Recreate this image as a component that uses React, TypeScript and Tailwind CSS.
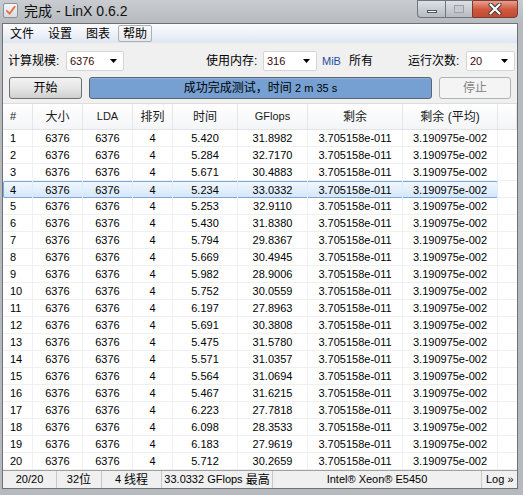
import React from "react";

const times = ["5.420","5.284","5.671","5.234","5.253","5.430","5.794","5.669","5.982","5.752","6.197","5.691","5.475","5.571","5.564","5.467","6.223","6.098","6.183","5.712"];
const gflops = ["31.8982","32.7170","30.4883","33.0332","32.9110","31.8380","29.8367","30.4945","28.9006","30.0559","27.8963","30.3808","31.5780","31.0357","31.0694","31.6215","27.7818","28.3533","27.9619","30.2659"];

function Combo({ value, w }: { value: string; w: string }) {
  return (
    <div className={`${w} h-[20px] bg-white border border-[#d5d5d5] rounded-[2px] flex items-center pl-[3px] pr-[5px]`}>
      <span className="text-[#3a0a0a] text-[11px]">{value}</span>
      <svg className="ml-auto" width="8" height="5" viewBox="0 0 8 5"><path d="M0 0H7L3.5 4Z" fill="#000" /></svg>
    </div>
  );
}

const cols = [
  { w: "w-[30px]", al: "justify-start pl-[7px]" },
  { w: "w-[50px]", al: "justify-center" },
  { w: "w-[50px]", al: "justify-center" },
  { w: "w-[40px]", al: "justify-center" },
  { w: "w-[65px]", al: "justify-center" },
  { w: "w-[70px]", al: "justify-center" },
  { w: "w-[95px]", al: "justify-center" },
  { w: "w-[95px]", al: "justify-center" },
];

export default function App() {
  const headers = ["#", "大小", "LDA", "排列", "时间", "GFlops", "剩余", "剩余 (平均)"];
  const hsize = ["text-[11px]", "text-[12px]", "text-[11px]", "text-[12px]", "text-[12px]", "text-[11px]", "text-[12px]", "text-[12px]"];
  const rows = times.map((t, i) => [String(i + 1), "6376", "6376", "4", t, gflops[i], "3.705158e-011", "3.190975e-002"]);
  return (
    <div className="w-[523px] h-[495px] bg-[#b6babe] flex flex-col overflow-hidden font-['Liberation_Sans','Noto_Sans_CJK_SC',sans-serif] text-[11px] text-black">
      {/* title bar */}
      <div className="h-[23px] flex items-start bg-gradient-to-b from-[#c9ccd0] to-[#b7bbbf]">
        <div className="mt-[3px] ml-[3px] w-[15px] h-[15px] rounded-[2px] border border-[#8a9199] bg-gradient-to-b from-[#f4f6f8] to-[#d8dde2] flex items-center justify-center">
          <svg width="11" height="11" viewBox="0 0 12 12"><path d="M2 6.5 L5 9.5 L10.5 2" stroke="#e8703a" strokeWidth="2" fill="none" strokeLinecap="round" /></svg>
        </div>
        <div className="ml-[6px] mt-[3px] text-[14px] leading-[17px] text-[#111] whitespace-nowrap">完成 - LinX 0.6.2</div>
        <div className="ml-auto mr-[5px] flex h-[18px]">
          <div className="w-[28px] h-full border border-[#6f757c] border-r-0 rounded-bl-[4px] bg-gradient-to-b from-[#dde1e5] to-[#b6bbc1] flex items-center justify-center">
            <div className="w-[10px] h-[3px] mt-[5px] bg-white border border-[#50565c]" />
          </div>
          <div className="w-[27px] h-full border border-[#6f757c] border-r-0 bg-gradient-to-b from-[#dde1e5] to-[#b6bbc1] flex items-center justify-center">
            <div className="w-[10px] h-[8px] border border-[#9ca1a6] bg-[#c8ccd0]" />
          </div>
          <div className="w-[46px] h-full border border-[#7a3a30] rounded-br-[4px] bg-gradient-to-b from-[#e8a090] via-[#d05a40] to-[#c24a30] flex items-center justify-center">
            <svg width="14" height="12" viewBox="0 0 14 12"><path d="M2.5 1.5 L11.5 10.5 M11.5 1.5 L2.5 10.5" stroke="#3a3a3a" strokeWidth="4" strokeLinecap="round" /><path d="M2.5 1.5 L11.5 10.5 M11.5 1.5 L2.5 10.5" stroke="#fff" strokeWidth="2.2" strokeLinecap="round" /></svg>
          </div>
        </div>
      </div>
      {/* client */}
      <div className="flex-1 ml-[2px] mr-[5px] mb-[6px] border border-[#6d7278] bg-[#f0f0f0] flex flex-col min-h-0">
        {/* menu */}
        <div className="h-[19px] flex items-center bg-gradient-to-b from-[#fdfdfe] to-[#dfe6f2] text-[12px] shrink-0">
          <span className="ml-[7px]">文件</span>
          <span className="ml-[14px]">设置</span>
          <span className="ml-[14px]">图表</span>
          <span className="ml-[8px] h-[17px] px-[4px] flex items-center border border-[#a9b0b8] rounded-[2px] bg-gradient-to-b from-[#fafafa] to-[#e6e8eb]">帮助</span>
        </div>
        {/* row 1 */}
        <div className="mt-[8px] h-[20px] flex items-center shrink-0 text-[12px]">
          <span className="ml-[5px] w-[58px]">计算规模:</span>
          <Combo value="6376" w="w-[58px]" />
          <span className="ml-[82px] w-[57px]">使用内存:</span>
          <Combo value="316" w="w-[54px]" />
          <span className="ml-[5px] text-[11px] text-[#1f4f9e]">MiB</span>
          <span className="ml-[8px]">所有</span>
          <span className="ml-[35px] w-[58px]">运行次数:</span>
          <Combo value="20" w="w-[49px]" />
        </div>
        {/* row 2 */}
        <div className="mt-[6px] h-[22px] flex shrink-0 text-[12px]">
          <div className="ml-[6px] w-[73px] h-full border border-[#707070] rounded-[3px] bg-gradient-to-b from-[#f2f2f2] via-[#e6e6e6] to-[#cfcfcf] flex items-center justify-center">开始</div>
          <div className="ml-[7px] w-[343px] h-full border border-[#5a6470] rounded-[3px] bg-[#76a0d2] shadow-[inset_0_1px_0_#8fb2dc] flex items-center justify-center">
            <span>成功完成测试，时间 <span className="text-[11px]">2 m 35 s</span></span>
          </div>
          <div className="ml-[7px] w-[72px] h-full border border-[#adb2b5] rounded-[3px] bg-[#f4f4f4] text-[#838383] flex items-center justify-center">停止</div>
        </div>
        {/* table */}
        <div className="mt-[4px] flex-1 flex flex-col bg-white border-t border-[#dcdcdc] min-h-0">
          <div className="h-[26px] flex shrink-0 bg-gradient-to-b from-[#ffffff] to-[#f4f5f7] border-b border-[#e2e4e8]">
            {headers.map((h, i) => (
              <div key={i} className={`${cols[i].w} ${cols[i].al} flex items-center border-r border-[#e4e6ea] ${hsize[i]} text-[#1a1a1a] whitespace-nowrap`}>{h}</div>
            ))}
            <div className="flex-1 border-r border-[#e4e6ea]" />
          </div>
          {rows.map((r, ri) => (
            <div key={ri} className="h-[17px] flex shrink-0">
              <div className={`flex ${ri === 3 ? "bg-gradient-to-b from-[#f2f8fe] to-[#d3e6fb] shadow-[inset_0_0_0_1px_#7fa6d8] rounded-[2px]" : "border-b border-[#f0f0f0]"}`}>
                {r.map((c, ci) => (
                  <div key={ci} className={`${cols[ci].w} ${cols[ci].al} flex items-center border-r ${ri === 3 ? "border-[#e0ebf9]" : "border-[#f0f0f0]"} leading-[16px] text-[11px]`}>{c}</div>
                ))}
              </div>
              <div className="flex-1 border-b border-[#f0f0f0]" />
            </div>
          ))}
          <div className="flex-1" />
        </div>
        {/* status bar */}
        <div className="h-[18px] flex shrink-0 border-t border-[#a0a0a0] bg-[#f0f0f0] text-[11px] whitespace-nowrap">
          <div className="w-[54px] flex items-center justify-center border-r border-[#c8c8c8]">20/20</div>
          <div className="w-[45px] flex items-center justify-center border-r border-[#c8c8c8]">32<span className="text-[12px]">位</span></div>
          <div className="w-[60px] flex items-center justify-center border-r border-[#c8c8c8]">4 <span className="text-[12px] ml-[3px]">线程</span></div>
          <div className="w-[111px] flex items-center justify-center border-r border-[#c8c8c8]">33.0332 GFlops <span className="text-[12px] ml-[3px]">最高</span></div>
          <div className="w-[209px] flex items-center justify-center border-r border-[#c8c8c8]">Intel® Xeon® E5450</div>
          <div className="flex-1 flex items-center pl-[4px]">Log »</div>
        </div>
      </div>
    </div>
  );
}
